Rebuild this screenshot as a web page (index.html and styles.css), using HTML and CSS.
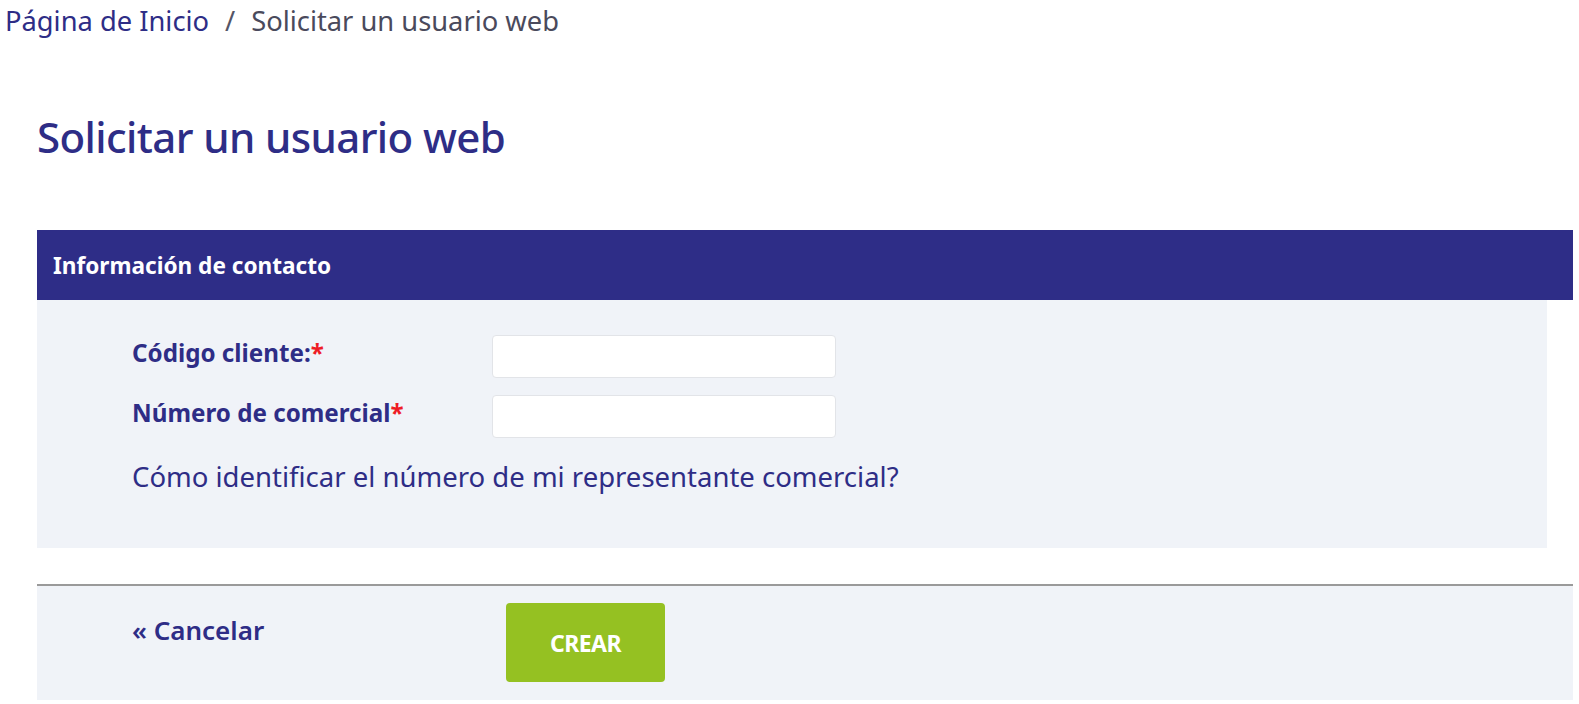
FILE: index.html
```html
<!DOCTYPE html>
<html lang="es">
<head>
<meta charset="utf-8">
<title>Solicitar un usuario web</title>
<link rel="stylesheet" href="styles.css">
</head>
<body>
<nav class="breadcrumb">
  <a class="crumb-link" href="#">Página de Inicio</a>
  <span class="crumb-sep">/</span>
  <span class="crumb-current">Solicitar un usuario web</span>
</nav>
<main class="page">
  <h1 class="page-title">Solicitar un usuario web</h1>
  <section class="panel">
    <div class="panel-header">Información de contacto</div>
    <div class="panel-body">
      <div class="form-row">
        <label class="form-label" for="codigo">Código cliente:<span class="req">*</span></label>
        <input class="form-input" id="codigo" type="text">
      </div>
      <div class="form-row">
        <label class="form-label" for="comercial">Número de comercial<span class="req">*</span></label>
        <input class="form-input" id="comercial" type="text">
      </div>
      <p class="help">Cómo identificar el número de mi representante comercial?</p>
    </div>
  </section>
  <div class="actions">
    <a class="cancel" href="#">« Cancelar</a>
    <button class="btn-create" type="button">CREAR</button>
  </div>
</main>
</body>
</html>
```
FILE: styles.css
```css
* { box-sizing: border-box; }
html, body { margin: 0; padding: 0; background: #ffffff; }
body {
  font-family: "Noto Sans", "Open Sans", sans-serif;
  color: #2e2d86;
  width: 1579px;
  height: 704px;
  overflow: hidden;
}
.breadcrumb {
  display: flex;
  align-items: center;
  gap: 16px;
  padding: 0 0 0 5px;
  height: 40px;
  font-size: 27.3px;
}
.crumb-link { color: #2e2d86; text-decoration: none; }
.crumb-sep { color: #555566; }
.crumb-current { color: #4a4a5c; }

.page { padding-left: 37px; width: 1573px; }
.page-title {
  margin: 68px 0 0 0;
  font-size: 42px;
  font-weight: 500;
  letter-spacing: -0.6px;
  line-height: 58px;
  color: #2e2d86;
}
.panel { margin-top: 64px; }
.panel-header {
  height: 70px;
  background: #2e2d87;
  color: #ffffff;
  font-weight: 700;
  font-size: 22.6px;
  display: flex;
  align-items: center;
  padding-left: 16px;
}
.panel-body {
  width: 1510px;
  background: #f0f3f8;
  padding: 35px 0 0 95px;
  height: 248px;
}
.form-row {
  display: grid;
  grid-template-columns: 360px 344px;
  align-items: center;
  margin-bottom: 17px;
}
.form-label {
  font-weight: 700;
  font-size: 24.2px;
  color: #2e2d86;
  margin-top: -8px;
}
.req { color: #ee1c25; }
.form-input {
  height: 43px;
  width: 344px;
  border: 1px solid #e2e4e8;
  border-radius: 4px;
  background: #ffffff;
}
.help {
  margin: 20px 0 0 0;
  font-size: 27.5px;
  color: #2e2d86;
}
.actions {
  margin-top: 36px;
  border-top: 2px solid #9a9a9a;
  background: #f0f3f8;
  height: 116px;
  display: flex;
  align-items: flex-start;
  padding-left: 95px;
}
.cancel {
  margin-top: 26px;
  width: 374px;
  font-size: 26px;
  font-weight: 600;
  color: #2e2d86;
  text-decoration: none;
}
.btn-create {
  margin-top: 17px;
  width: 159px;
  height: 79px;
  background: #95c122;
  color: #ffffff;
  border: none;
  border-radius: 4px;
  font-family: "Noto Sans", "Open Sans", sans-serif;
  font-weight: 700;
  font-size: 23px;
  letter-spacing: -0.5px;
  padding: 0;
}
```
